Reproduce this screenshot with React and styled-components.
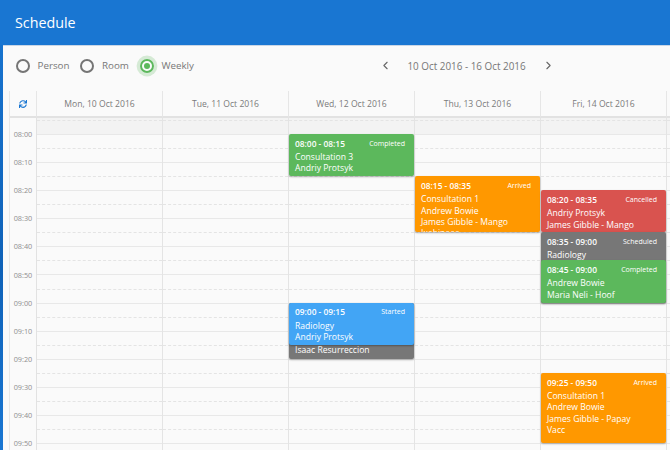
import React from "react";
import styled, { createGlobalStyle } from "styled-components";
import { ChevronLeft, ChevronRight } from "lucide-react";
import { FaSync } from "react-icons/fa";

const PX_PER_MIN = 2.81;
const SLOT = 14.05;
const SLOT_COUNT = 24;

const GlobalStyle = createGlobalStyle`
  html, body {
    margin: 0;
    height: 100%;
    overflow: hidden;
    background: #fafafa;
    font-family: "Open Sans", "Noto Sans", sans-serif;
  }
`;

const Page = styled.div`
  width: 670px;
  height: 450px;
  overflow: hidden;
  background: linear-gradient(#1976d2, #0f62b8 60%, #1976d2);
  display: flex;
  flex-direction: column;
`;
const Header = styled.header`
  flex: none;
  height: 45px;
  box-sizing: border-box;
  padding: 0 15px;
  display: flex;
  align-items: center;
  color: white;
  font-size: 14.3px;
  font-weight: 400;
  background: #1976d2;
`;
const Content = styled.main`
  flex: 1;
  margin-left: 3px;
  background: #fafafa;
  border-top: 1px solid #c9d6e6;
  min-height: 0;
`;
const Toolbar = styled.div`
  height: 45px;
  box-sizing: border-box;
  padding-bottom: 6px;
  position: relative;
  display: flex;
  align-items: center;
`;
const RadioGroup = styled.div`
  display: flex;
  align-items: center;
  padding-left: 13px;
`;
const RadioOption = styled.label`
  display: flex;
  align-items: center;
  margin-right: ${props => props.gap}px;
  font-size: 9.8px;
  color: #777;
`;
const RadioRing = styled.span`
  box-sizing: border-box;
  width: 14px;
  height: 14px;
  margin-right: 7.5px;
  border-radius: 50%;
  border: 2px solid ${props => (props.checked ? "#5cb85c" : "#757575")};
  display: flex;
  align-items: center;
  justify-content: center;
  box-shadow: ${props => (props.checked ? "0 0 0 3.4px #d5ead5" : "none")};
  &::after {
    content: "";
    display: ${props => (props.checked ? "block" : "none")};
    width: 6px;
    height: 6px;
    border-radius: 50%;
    background: #5cb85c;
  }
`;
const WeekNav = styled.div`
  position: absolute;
  left: 375.5px;
  top: 0;
  height: 39px;
  display: flex;
  align-items: center;
  color: #666;
`;
const WeekLabel = styled.span`
  width: 150px;
  text-align: center;
  font-size: 9.9px;
  color: #777;
`;
const Calendar = styled.div`
  margin-left: 7px;
  display: grid;
  grid-template-columns: 27px repeat(6, 126px);
  box-shadow: -1px 0 0 #e8e8e8;
`;
const HeadCell = styled.div`
  height: 27px;
  box-sizing: border-box;
  display: flex;
  align-items: center;
  justify-content: center;
  font-size: 8.6px;
  color: #7b7b7b;
  border-right: 1px solid #e6e6e6;
  border-bottom: 2px solid #e2e2e2;
`;
const TimeColumn = styled.div`
  border-right: 1px solid #e2e2e2;
  box-sizing: border-box;
  height: 332px;
`;
const TimeLabel = styled.div`
  height: ${SLOT * 2}px;
  display: flex;
  align-items: center;
  justify-content: center;
  font-size: 7.3px;
  color: #8f8f8f;
`;
const TimeOffset = styled.div`
  height: 2px;
`;
const DayColumn = styled.div`
  position: relative;
  box-sizing: border-box;
  border-right: 1px solid #e4e4e4;
`;
const Slot = styled.div`
  height: ${props => props.size}px;
  box-sizing: border-box;
  background: ${props => (props.muted ? "#f3f3f3" : "transparent")};
  border-bottom: 1px ${props => (props.solid ? "solid #e8e8e8" : "dashed #e4e4e4")};
`;
const EventCard = styled.div`
  position: absolute;
  left: 0;
  right: 0;
  box-sizing: border-box;
  padding: 4px 6px 0;
  border-radius: 2px;
  overflow: hidden;
  color: white;
  font-size: 8.6px;
  line-height: 11.4px;
  background: ${props => props.color};
  box-shadow: 0 1px 2px rgba(0, 0, 0, 0.3);
`;
const TailCard = styled(EventCard)`
  display: flex;
  align-items: flex-end;
  padding-bottom: 2.3px;
`;
const EventHead = styled.div`
  display: flex;
  align-items: center;
  justify-content: space-between;
  padding-right: 3px;
  margin-bottom: 3px;
  height: 11px;
`;
const EventTime = styled.span`
  font-weight: 600;
  font-size: 8.4px;
`;
const EventStatus = styled.span`
  font-size: 7px;
`;
const EventLine = styled.div``;

const days = [
  "Mon, 10 Oct 2016",
  "Tue, 11 Oct 2016",
  "Wed, 12 Oct 2016",
  "Thu, 13 Oct 2016",
  "Fri, 14 Oct 2016",
  ""
];

const times = [
  "08:00", "08:10", "08:20", "08:30", "08:40", "08:50",
  "09:00", "09:10", "09:20", "09:30", "09:40", "09:50"
];

const colors = {
  Completed: "#5cb85c",
  Arrived: "#ff9800",
  Cancelled: "#d9534f",
  Scheduled: "#777777",
  Started: "#42a5f5"
};

// start and end are minutes after 08:00
const events = [
  { day: 2, start: 0, end: 15, time: "08:00 - 08:15", status: "Completed", lines: ["Consultation 3", "Andriy Protsyk"] },
  { day: 2, start: 60, end: 80, status: "Scheduled", lines: ["Isaac Resurreccion"], tail: true },
  { day: 2, start: 60, end: 75, time: "09:00 - 09:15", status: "Started", lines: ["Radiology", "Andriy Protsyk"] },
  { day: 3, start: 15, end: 35, time: "08:15 - 08:35", status: "Arrived", lines: ["Consultation 1", "Andrew Bowie", "James Gibble - Mango", "Ixabinaaa"] },
  { day: 4, start: 20, end: 35, time: "08:20 - 08:35", status: "Cancelled", lines: ["Andriy Protsyk", "James Gibble - Mango"] },
  { day: 4, start: 35, end: 60, time: "08:35 - 09:00", status: "Scheduled", lines: ["Radiology"] },
  { day: 4, start: 45, end: 60, time: "08:45 - 09:00", status: "Completed", lines: ["Andrew Bowie", "Maria Neli - Hoof"] },
  { day: 4, start: 85, end: 110, time: "09:25 - 09:50", status: "Arrived", lines: ["Consultation 1", "Andrew Bowie", "James Gibble - Papay", "Vacc"] }
];

const radios = [
  { label: "Person", gap: 11 },
  { label: "Room", gap: 11 },
  { label: "Weekly", gap: 0, checked: true }
];

const TOP_OFFSET = 16;

const Event = ({ event }) => {
  const box = {
    top: TOP_OFFSET + event.start * PX_PER_MIN,
    height: (event.end - event.start) * PX_PER_MIN
  };
  if (event.tail) {
    // only the bottom of this one shows below the card lying over it
    return (
      <TailCard color={colors[event.status]} style={box}>
        {event.lines[0]}
      </TailCard>
    );
  }
  return (
    <EventCard color={colors[event.status]} style={box}>
      <EventHead>
        <EventTime>{event.time}</EventTime>
        <EventStatus>{event.status}</EventStatus>
      </EventHead>
      {event.lines.map((line, n) => (
        <EventLine key={n}>{line}</EventLine>
      ))}
    </EventCard>
  );
};

const App = () => (
  <Page>
    <GlobalStyle />
    <Header>Schedule</Header>
    <Content>
      <Toolbar>
        <RadioGroup>
          {radios.map(r => (
            <RadioOption key={r.label} gap={r.gap}>
              <RadioRing checked={r.checked} />
              {r.label}
            </RadioOption>
          ))}
        </RadioGroup>
        <WeekNav>
          <ChevronLeft size={13} />
          <WeekLabel>10 Oct 2016 - 16 Oct 2016</WeekLabel>
          <ChevronRight size={13} />
        </WeekNav>
      </Toolbar>
      <Calendar>
        <HeadCell>
          <FaSync size={8} color="#1976d2" />
        </HeadCell>
        {days.map((d, i) => (
          <HeadCell key={i}>{d}</HeadCell>
        ))}
        <TimeColumn>
          <TimeOffset />
          {times.map(t => (
            <TimeLabel key={t}>{t}</TimeLabel>
          ))}
        </TimeColumn>
        {days.map((d, i) => (
          <DayColumn key={i}>
            <Slot size={3} muted />
            <Slot size={14} muted solid />
            {Array.from({ length: SLOT_COUNT }, (_, n) => (
              <Slot key={n} size={SLOT} solid={n % 2 === 1} />
            ))}
            {events
              .filter(e => e.day === i)
              .map(e => (
                <Event key={e.start + e.status} event={e} />
              ))}
          </DayColumn>
        ))}
      </Calendar>
    </Content>
  </Page>
);

export default App;
